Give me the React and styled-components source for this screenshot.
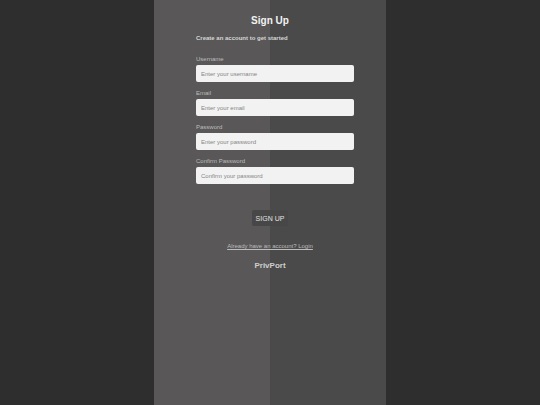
import React from "react";
import styled, { createGlobalStyle } from "styled-components";

const Global = createGlobalStyle`
  html, body { margin: 0; padding: 0; height: 100%; }
  body {
    background: #2e2e2e;
    font-family: "Liberation Sans", Arial, sans-serif;
  }
  #root { min-height: 100%; }
  * { box-sizing: border-box; }
`;

const Page = styled.div`
  display: flex;
  justify-content: center;
  min-height: 100vh;
`;

const Panel = styled.main`
  width: 232px;
  min-height: 100vh;
  background: linear-gradient(to right, #595757 50%, #4a4a4a 50%);
  padding: 15px 32px 0 42px;
  display: flex;
  flex-direction: column;
`;

const Title = styled.h1`
  margin: 0 0 0 -10px;
  font-size: 10px;
  line-height: 12px;
  font-weight: 700;
  color: #f2f2f2;
  text-align: center;
`;

const Subtitle = styled.p`
  margin: 7px 0 13px;
  font-size: 6px;
  line-height: 8px;
  font-weight: 700;
  color: #d6d6d6;
`;

const Form = styled.form`
  display: flex;
  flex-direction: column;
  gap: 7px;
`;

const Field = styled.div`
  display: flex;
  flex-direction: column;
  gap: 1px;
`;

const Label = styled.label`
  font-size: 6px;
  line-height: 9px;
  color: #bdbdbd;
`;

const Input = styled.input`
  height: 17px;
  width: 100%;
  border: none;
  border-radius: 2px;
  background: #f2f2f2;
  padding: 0 5px;
  font-family: "Liberation Sans", Arial, sans-serif;
  font-size: 6px;
  color: #333;
  outline: none;
  &::placeholder { color: #858585; }
`;

const ButtonRow = styled.div`
  display: flex;
  justify-content: center;
  margin: 26px 0 0 -10px;
`;

const Button = styled.button`
  height: 16px;
  padding: 0 4px;
  border: none;
  border-radius: 2px;
  background: #474747;
  color: #e2e2e2;
  font-family: "Liberation Sans", Arial, sans-serif;
  font-size: 7px;
  cursor: pointer;
`;

const LinkRow = styled.div`
  display: flex;
  justify-content: center;
  margin: 16px 0 0 -10px;
`;

const LoginLink = styled.a`
  font-size: 6px;
  line-height: 8px;
  color: #bcbcbc;
  text-decoration: underline;
`;

const Brand = styled.div`
  margin: 11px 0 0 -10px;
  text-align: center;
  font-size: 8px;
  line-height: 10px;
  font-weight: 700;
  color: #cfcfcf;
`;

const fields = [
  { id: "username", label: "Username", placeholder: "Enter your username", type: "text" },
  { id: "email", label: "Email", placeholder: "Enter your email", type: "email" },
  { id: "password", label: "Password", placeholder: "Enter your password", type: "password" },
  { id: "confirm", label: "Confirm Password", placeholder: "Confirm your password", type: "password" },
];

export default function App() {
  return (
    <>
      <Global />
      <Page>
        <Panel>
          <Title>Sign Up</Title>
          <Subtitle>Create an account to get started</Subtitle>
          <Form onSubmit={(e) => e.preventDefault()}>
            {fields.map((f) => (
              <Field key={f.id}>
                <Label htmlFor={f.id}>{f.label}</Label>
                <Input id={f.id} type={f.type} placeholder={f.placeholder} />
              </Field>
            ))}
          </Form>
          <ButtonRow>
            <Button type="button">SIGN UP</Button>
          </ButtonRow>
          <LinkRow>
            <LoginLink href="#">Already have an account? Login</LoginLink>
          </LinkRow>
          <Brand>PrivPort</Brand>
        </Panel>
      </Page>
    </>
  );
}
